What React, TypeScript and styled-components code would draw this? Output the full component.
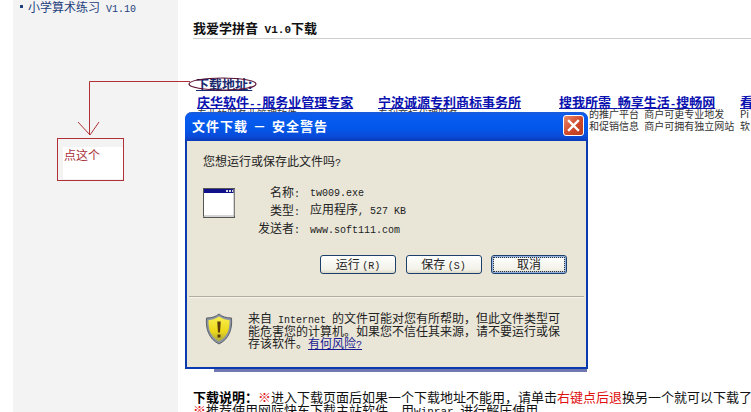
import React from 'react'
import styled, { createGlobalStyle } from 'styled-components'

const cjk = `"Noto Sans CJK SC", "Liberation Sans", sans-serif`
const mono = `"Liberation Mono", "Noto Sans CJK SC", monospace`

const GlobalStyle = createGlobalStyle`
  html, body {
    margin: 0;
    padding: 0;
    background: #fff;
  }
`

const Page = styled.div`
  position: relative;
  display: flex;
  width: 751px;
  height: 412px;
  overflow: hidden;
  background: #fff;
  font-family: ${cjk};
  font-size: 12px;
`

// half-width latin next to the CJK text, as in the old bitmap font
const Latin = styled.span<{ $size?: number }>`
  font-family: ${mono};
  font-size: ${p => p.$size ?? 10}px;
  line-height: 0;
  white-space: pre;
`

const Sidebar = styled.aside`
  flex: none;
  width: 165px;
  margin-left: 13px;
  background: #f3f3f3;
  color: #1d3f7c;
`

const NavItem = styled.div`
  display: flex;
  align-items: center;
  gap: 5px;
  padding-left: 7px;
  height: 12px;
  white-space: nowrap;

  &::before {
    content: '';
    width: 3px;
    height: 3px;
    background: #1d3f7c;
  }
`

const Main = styled.main`
  flex: 1;
  min-width: 0;
  padding: 20px 0 0 15px;
`

const Title = styled.h1`
  margin: 0;
  height: 18px;
  border-bottom: 1px solid #cfcfcf;
  font: bold 13px/16px ${cjk};
  color: #111;
  white-space: pre;
`

const Section = styled.div`
  margin-top: 37px;
  padding-left: 3px;
  font: bold 13px/16px ${cjk};
  color: #1a2a70;
  text-decoration: underline;
`

const AdRow = styled.div`
  display: grid;
  grid-template-columns: repeat(4, 181px);
  margin: 3px 0 0 4px;
  height: 295px;
`

const Ad = styled.div`
  white-space: nowrap;
`

const AdLink = styled.div`
  font: bold 13px/13px ${cjk};
  color: #0b12b0;
  text-decoration: underline;
`

const AdText = styled.div`
  font: 10px/12px ${cjk};
  color: #333;
  word-spacing: 3px;
`

const Notes = styled.div`
  font: 13px/13px ${cjk};
  color: #111;
  white-space: nowrap;
`

const NoteLabel = styled.b`
  color: #000;
`

const Red = styled.span`
  color: #e01010;
`

const Annotation = styled.svg`
  position: absolute;
  left: 0;
  top: 0;
  pointer-events: none;
`

const ClickNote = styled.div`
  position: absolute;
  left: 57px;
  top: 138px;
  width: 67px;
  height: 43px;
  padding: 8px 0 0 6px;
  box-sizing: border-box;
  border: 1px solid #b03038;
  background: #f3f3f3 linear-gradient(#fff, #fff) 5px 8px / 60px 32px no-repeat;
  color: #a83038;
  font: 12px/16px ${cjk};
`

const Dialog = styled.section`
  position: absolute;
  left: 185px;
  top: 112px;
  width: 403px;
  height: 257px;
  box-sizing: border-box;
  display: flex;
  flex-direction: column;
  border: 2px solid #0a3ab0;
  border-top: 0;
  border-radius: 7px 7px 0 0;
  background: #e9e6d8;
  color: #222;
  font-family: ${cjk};

  &::after {
    content: '';
    position: absolute;
    left: 27px;
    right: -1px;
    bottom: -5px;
    height: 3px;
    background: #6f78b0;
  }
`

const TitleBar = styled.header`
  flex: none;
  display: flex;
  align-items: center;
  justify-content: space-between;
  height: 29px;
  margin: 0 -2px;
  padding: 0 4px 2px 7px;
  box-sizing: border-box;
  border-radius: 7px 7px 0 0;
  background: linear-gradient(#1a5ad8 0, #0a5cf0 12%, #0258ea 55%, #0a4ad8 85%, #0a3ab8 100%);
  color: #fff;
  font-size: 13px;
  font-weight: 700;
  letter-spacing: 1px;
  word-spacing: 1px;
`

const CloseButton = styled.div`
  width: 21px;
  height: 21px;
  box-sizing: border-box;
  border: 1px solid #fff;
  border-radius: 3px;
  background: linear-gradient(135deg, #e88a6a, #d0482a 55%, #b83c20);
  display: flex;
  align-items: center;
  justify-content: center;
`

const Body = styled.div`
  flex: 1;
  display: flex;
  flex-direction: column;
  padding: 12px 16px 0;
`

const Question = styled.div`
  line-height: 16px;
  margin-bottom: 13px;
`

const Details = styled.div`
  display: flex;
  height: 57px;
`

const FileIcon = styled.svg`
  flex: none;
  margin-top: 6px;
`

const Info = styled.dl`
  display: grid;
  grid-template-columns: 65px 1fr;
  grid-auto-rows: 18.3px;
  column-gap: 10px;
  align-items: center;
  margin: 0;
`

const Term = styled.dt`
  text-align: right;
  white-space: pre;
`

const Value = styled.dd`
  margin: 0;
  line-height: 14px;
  white-space: pre;
`

const Buttons = styled.div`
  display: flex;
  justify-content: flex-end;
  gap: 9.5px;
  margin-top: 16px;
  padding-right: 3px;
`

const Button = styled.div<{ $focused?: boolean }>`
  width: 76px;
  height: 19px;
  box-sizing: border-box;
  border: 1px solid #1c3f6c;
  border-radius: 3px;
  background: linear-gradient(#fff, #f2f1e8 80%, #dcd8c8);
  line-height: 16px;
  text-align: center;
  white-space: pre;
  box-shadow: ${p => (p.$focused ? 'inset 0 0 0 1.5px #8fb0e0' : 'none')};
  outline: ${p => (p.$focused ? '1px dotted #333' : 'none')};
  outline-offset: -3px;
`

const Warning = styled.footer`
  flex: none;
  display: flex;
  gap: 15px;
  height: 71px;
  margin: 0 2px;
  padding: 16px 0 0 16px;
  box-sizing: border-box;
  border-top: 1px solid #b0ad9e;
  box-shadow: inset 0 1px 0 #f6f5ec;
`

const WarningText = styled.p`
  width: 316px;
  margin: -1px 0 0;
  font-size: 12px;
  line-height: 12.5px;
  color: #222;
`

const HelpLink = styled.span`
  color: #1a1a90;
  text-decoration: underline;
`

export default function App() {
  return (
    <Page>
      <GlobalStyle />
      <Sidebar>
        <NavItem><span>小学算术练习<Latin> V1.10</Latin></span></NavItem>
      </Sidebar>
      <Main>
        <Title>我爱学拼音<Latin $size={11}> V1.0</Latin>下载</Title>
        <Section>下载地址:</Section>
        <AdRow>
          <Ad>
            <AdLink>庆华软件<Latin $size={11}>--</Latin>服务业管理专家</AdLink>
            <AdText>专业的服务业管理软件</AdText>
          </Ad>
          <Ad>
            <AdLink>宁波诚源专利商标事务所</AdLink>
            <AdText>专利商标代理服务</AdText>
          </Ad>
          <Ad>
            <AdLink>搜我所需<Latin $size={11}> </Latin>畅享生活<Latin $size={11}>-</Latin>搜畅网</AdLink>
            <AdText>&emsp;&emsp;&emsp;的推广平台 商户可更专业地发</AdText>
            <AdText>&emsp;&emsp;&emsp;和促销信息 商户可拥有独立网站</AdText>
          </Ad>
          <Ad>
            <AdLink>看</AdLink>
            <AdText>Pi</AdText>
            <AdText>软</AdText>
          </Ad>
        </AdRow>
        <Notes>
          <NoteLabel>下载说明：</NoteLabel>
          <Red>※</Red>进入下载页面后如果一个下载地址不能用，请单击<Red>右键点后退</Red>换另一个就可以下载了
          <br />
          <Red>※</Red>推荐使用网际快车下载主站软件，用<Latin $size={11}>Winrar </Latin>进行解压使用
        </Notes>
      </Main>

      <Annotation width="751" height="412" viewBox="0 0 751 412" fill="none" stroke="#b03038">
        <path d="M190 81.5H89.5V135" />
        <path d="M78 122L90 135L99 122" />
        <ellipse cx="222.5" cy="84" rx="33.5" ry="6" stroke="#5a1030" strokeWidth="1.2" />
      </Annotation>
      <ClickNote>点这个</ClickNote>

      <Dialog>
        <TitleBar>
          <span>文件下载 － 安全警告</span>
          <CloseButton>
            <svg width="13" height="13" viewBox="0 0 13 13" stroke="#fff" strokeWidth="2.4" strokeLinecap="square">
              <path d="M2 2L11 11M11 2L2 11" />
            </svg>
          </CloseButton>
        </TitleBar>
        <Body>
          <Question>您想运行或保存此文件吗<Latin>?</Latin></Question>
          <Details>
            <FileIcon width="32" height="30" viewBox="0 0 32 30">
              <rect x="0.5" y="0.5" width="31" height="29" fill="#fff" stroke="#555" />
              <rect x="1" y="1" width="30" height="4" fill="#10108a" />
              <path d="M23 2h2v2h-2zM26 2h2v2h-2zM29 2h1v2h-1z" fill="#ddd" />
              <path d="M1 29V28H31V1" stroke="#aaa" fill="none" />
            </FileIcon>
            <Info>
              <Term>名称<Latin>:</Latin></Term>
              <Value><Latin>tw009.exe</Latin></Value>
              <Term>类型<Latin>:</Latin></Term>
              <Value>应用程序<Latin>, 527 KB</Latin></Value>
              <Term>发送者<Latin>:</Latin></Term>
              <Value><Latin>www.soft111.com</Latin></Value>
            </Info>
          </Details>
          <Buttons>
            <Button>运行 <Latin>(R)</Latin></Button>
            <Button>保存 <Latin>(S)</Latin></Button>
            <Button $focused>取消</Button>
          </Buttons>
        </Body>
        <Warning>
          <svg width="28" height="32" viewBox="0 0 28 32">
            <defs>
              <linearGradient id="shieldFill" x1="0" y1="0" x2="0" y2="1">
                <stop offset="0" stopColor="#f8ee50" />
                <stop offset="0.6" stopColor="#ecd818" />
                <stop offset="1" stopColor="#a8a848" />
              </linearGradient>
            </defs>
            <path d="M14 1C17 3.5 21 5 26.5 5C27.5 16 24 26 14 31C4 26 .5 16 1.5 5C7 5 11 3.5 14 1Z" fill="#8a94a4" stroke="#5c6068" />
            <path d="M14 3.5C17 5.5 20.5 6.8 24.5 7C25 16 22 24.5 14 28.5C6 24.5 3 16 3.5 7C7.5 6.8 11 5.5 14 3.5Z" fill="url(#shieldFill)" />
            <path d="M12.3 8.5H15.7L15 19.5H13Z" fill="#5a3a08" />
            <rect x="12.5" y="21.5" width="3" height="3" fill="#5a3a08" />
          </svg>
          <WarningText>
            来自<Latin> Internet </Latin>的文件可能对您有所帮助，但此文件类型可能危害您的计算机。如果您不信任其来源，请不要运行或保存该软件。<HelpLink>有何风险<Latin>?</Latin></HelpLink>
          </WarningText>
        </Warning>
      </Dialog>
    </Page>
  )
}
